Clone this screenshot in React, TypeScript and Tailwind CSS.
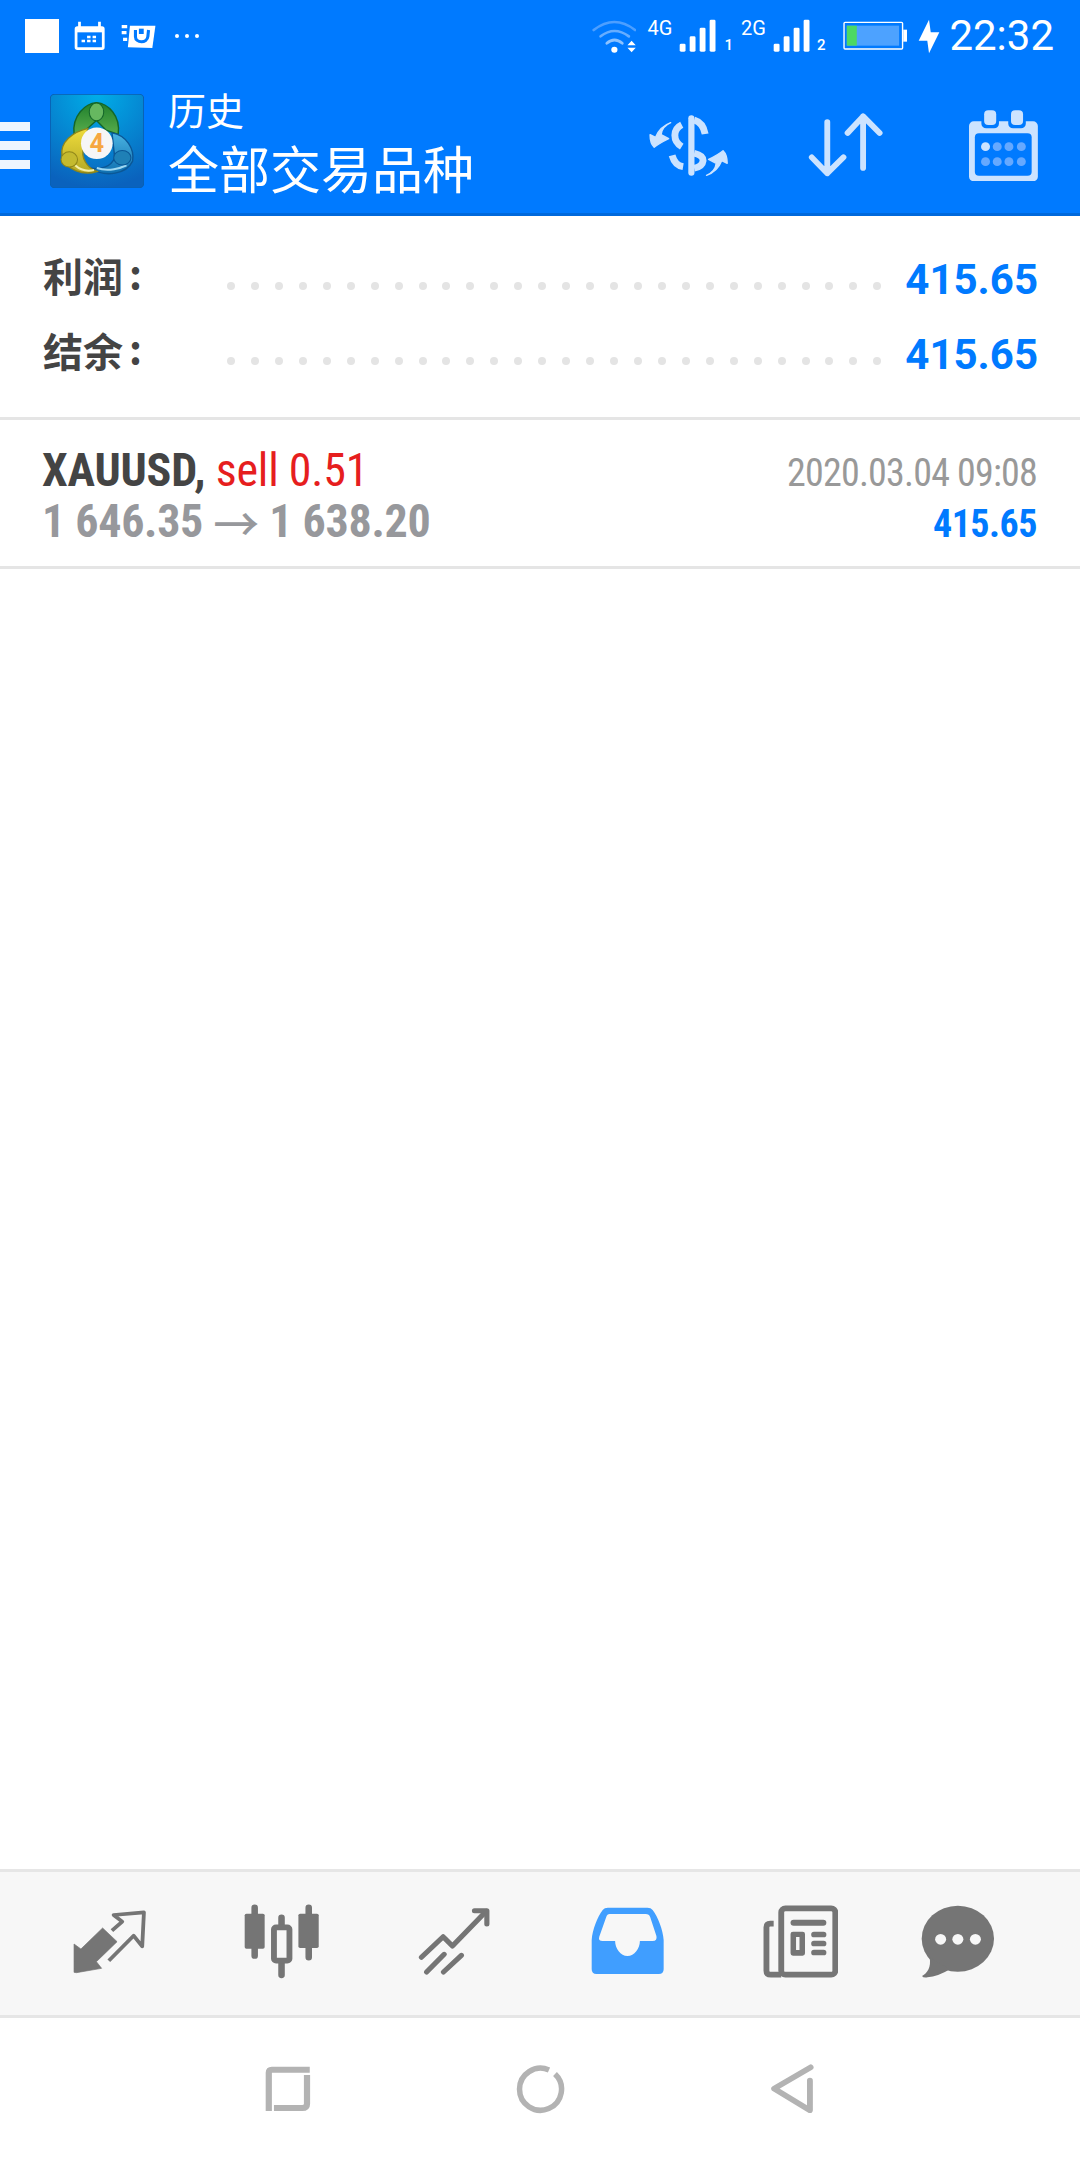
import React from "react";

const Z = ({ x, y, w, h, className, children }: { x: number; y: number; w: number; h: number; className?: string; children: React.ReactNode }) => (
  <svg viewBox={`${x} ${y} ${w} ${h}`} preserveAspectRatio="none" width={w / 2.904} height={h / 3} className={className}>
    {children}
  </svg>
);

const Signal = () => (
  <Z x={405} y={58} w={108} h={100}>
    <rect x={407} y={132} width={17} height={24} rx={4} fill="#fff" />
    <rect x={436} y={110} width={17} height={46} rx={4} fill="#fff" />
    <rect x={465} y={84} width={17} height={72} rx={4} fill="#fff" />
    <rect x={494} y={60} width={17} height={96} rx={4} fill="#fff" />
  </Z>
);

const Logo = () => (
  <svg viewBox="62 55 273 273" width={94} height={94} className="shrink-0">
    <defs>
      <radialGradient id="lg" cx="50%" cy="0%" r="100%">
        <stop offset="0%" stopColor="#00aee8" />
        <stop offset="100%" stopColor="#0a62bd" />
      </radialGradient>
      <linearGradient id="gr" x1="0" y1="0" x2="0" y2="1">
        <stop offset="0%" stopColor="#1f7f2c" />
        <stop offset="100%" stopColor="#58ad4c" />
      </linearGradient>
      <linearGradient id="ye" x1="0" y1="0" x2="0" y2="1">
        <stop offset="0%" stopColor="#efdc3c" />
        <stop offset="100%" stopColor="#b5a925" />
      </linearGradient>
      <linearGradient id="bl" x1="0" y1="0" x2="0" y2="1">
        <stop offset="0%" stopColor="#4ab4e2" />
        <stop offset="100%" stopColor="#0f6fb0" />
      </linearGradient>
    </defs>
    <rect x={63} y={56} width={271} height={271} rx={12} fill="url(#lg)" stroke="#0a5fb0" strokeWidth={3} />
    <path d="M132 172C125 118 165 82 197 80C230 82 268 118 260 172L225 160L197 132L165 160Z" fill="url(#gr)" stroke="#14662a" strokeWidth={4} />
    <ellipse cx={197} cy={107} rx={21} ry={26} fill="#66b860" stroke="#14662a" strokeWidth={3} />
    <path d="M242 168C284 175 308 215 302 250C285 286 225 300 178 270C212 276 240 265 250 240Z" fill="url(#bl)" stroke="#0b5796" strokeWidth={4} />
    <path d="M198 270C232 282 268 270 284 262" fill="none" stroke="#9fd8f2" strokeWidth={6} />
    <ellipse cx={272} cy={240} rx={25} ry={21} fill="#1f80b6" stroke="#0b5796" strokeWidth={3} />
    <path d="M172 155C128 165 90 195 97 235C110 278 160 292 198 280C170 270 150 240 160 210Z" fill="url(#ye)" stroke="#8f861a" strokeWidth={4} />
    <path d="M135 262C150 276 172 280 190 276" fill="none" stroke="#f4efa8" strokeWidth={6} />
    <ellipse cx={118} cy={245} rx={24} ry={22} fill="#c4ba2f" stroke="#8f861a" strokeWidth={3} />
    <circle cx={198} cy={198} r={46} fill="#f6f6f6" />
    <text x={198} y={224} textAnchor="middle" fontSize={74} fontWeight={700} fontFamily="Roboto, sans-serif" fill="#f6a740">4</text>
  </svg>
);

const Dots = () => (
  <div className="flex flex-1 justify-between mt-[14px] ml-[8px] mr-[24px]">
    {Array.from({ length: 28 }).map((_, i) => (
      <div key={i} className="w-[8px] h-[8px] rounded-full bg-[#e4e4e4]" />
    ))}
  </div>
);

const Summary = ({ label }: { label: string }) => (
  <div className="flex items-center h-[75px]">
    <div className="w-[176px] -mt-[8px] flex text-[40px] font-bold text-[#444] leading-none [font-family:'Noto_Sans_CJK_SC',sans-serif]">
      <span>{label}</span>
      <span className="ml-[6px] -mt-[3px]">:</span>
    </div>
    <Dots />
    <span className="text-[42px] font-bold text-[#007aff] leading-none [font-family:Roboto,sans-serif] mt-[3px]">415.65</span>
  </div>
);

export default function App() {
  return (
    <div className="flex flex-col w-[1080px] h-[2160px] bg-white overflow-hidden [font-family:Roboto,sans-serif]">
      <header className="flex flex-col h-[216px] bg-[#007aff] border-b-[3px] border-[#0069dc] text-white">
        <div className="flex items-center justify-between h-[72px] pl-[25px] pr-[26px]">
          <div className="flex items-center">
            <div className="w-[34px] h-[34px] bg-white" />
            <Z x={216} y={64} w={92} h={88} className="ml-[15px]">
              <rect x={222} y={84} width={79} height={63} rx={4} fill="none" stroke="#fff" strokeWidth={8} />
              <rect x={222} y={84} width={79} height={14} fill="#fff" />
              <path d="M232 66V84M290 66V84" stroke="#fff" strokeWidth={8} />
              <path d="M254 108h10v8h-10zM270 108h10v8h-10zM238 120h10v8h-10zM254 120h10v8h-10zM270 120h10v8h-10z" fill="#fff" />
            </Z>
            <Z x={350} y={70} w={102} h={74} className="ml-[15px]">
              <path d="M376 75H450L441 142L370 140Z" fill="#fff" />
              <path d="M352 78H368M352 96H366M356 116H368" stroke="#fff" strokeWidth={10} />
              <path d="M392 88V108C392 128 426 128 428 108L430 88" fill="none" stroke="#007aff" strokeWidth={9} />
              <path d="M402 84H416V100H402Z" fill="#007aff" />
            </Z>
            <div className="flex gap-[6px] ml-[19px]">
              <div className="w-[4px] h-[4px] rounded-full bg-white" />
              <div className="w-[4px] h-[4px] rounded-full bg-white" />
              <div className="w-[4px] h-[4px] rounded-full bg-white" />
            </div>
          </div>
          <div className="flex items-center">
            <Z x={140} y={55} w={130} h={105}>
              <path d="M145 88Q205 40 265 88" fill="none" stroke="#4d9fff" strokeWidth={8} strokeLinecap="round" />
              <path d="M165 107Q205 75 247 107" fill="none" stroke="#66adff" strokeWidth={8} strokeLinecap="round" />
              <path d="M183 128Q205 108 228 128" fill="none" stroke="#8cc2ff" strokeWidth={8} strokeLinecap="round" />
              <circle cx={205} cy={147} r={9} fill="#fff" />
              <path d="M255 120L267 134H243ZM255 155L267 141H243Z" fill="#fff" />
            </Z>
            <span className="ml-[11px] mb-[16px] text-[20px] leading-none">4G</span>
            <div className="ml-[7px]"><Signal /></div>
            <span className="ml-[8px] mt-[18px] text-[15px] font-medium leading-none">1</span>
            <span className="ml-[8px] mb-[16px] text-[20px] leading-none">2G</span>
            <div className="ml-[7px]"><Signal /></div>
            <span className="ml-[7px] mt-[18px] text-[15px] font-medium leading-none">2</span>
            <Z x={880} y={64} w={188} h={88} className="ml-[17px]">
              <rect x={883} y={68} width={170} height={80} rx={3} fill="none" stroke="#fff" strokeWidth={4} />
              <rect x={891} y={78} width={152} height={60} fill="#4da2ff" />
              <rect x={891} y={78} width={29} height={60} fill="#4cd964" />
              <rect x={1055} y={90} width={11} height={36} fill="#fff" />
            </Z>
            <Z x={1098} y={55} w={64} h={105} className="ml-[11px]">
              <path d="M1130 57L1100 120H1125L1130 158L1160 95H1135Z" fill="#fff" />
            </Z>
            <span className="ml-[9px] text-[42px] leading-none">22:32</span>
          </div>
        </div>
        <div className="flex items-center flex-1 pb-[6px]">
          <div className="flex flex-col gap-[10px] w-[30px] mt-[12px] shrink-0">
            <div className="h-[9px] bg-[#eef6ff]" />
            <div className="h-[9px] bg-[#eef6ff]" />
            <div className="h-[9px] bg-[#eef6ff]" />
          </div>
          <div className="ml-[20px] mt-[3px]"><Logo /></div>
          <div className="flex flex-col gap-[7px] mt-[2px] ml-[24px] [font-family:'Noto_Sans_CJK_SC',sans-serif] font-normal">
            <span className="text-[38px] leading-[46px]">历史</span>
            <span className="text-[51px] leading-[56px]">全部交易品种</span>
          </div>
          <div className="flex items-center ml-auto mr-[42px] mt-[12px]">
            <Z x={318} y={335} w={236} h={184}>
              <path d="M444 345V508" stroke="#cce3ff" strokeWidth={18} strokeLinecap="round" />
              <path d="M416 364Q396 374 396 396Q396 418 416 430" fill="none" stroke="#cce3ff" strokeWidth={20} />
              <path d="M452 350Q478 358 484 392" fill="none" stroke="#cce3ff" strokeWidth={20} />
              <path d="M388 456Q396 486 420 490" fill="none" stroke="#cce3ff" strokeWidth={20} />
              <path d="M452 450Q478 456 478 472Q476 490 452 495" fill="none" stroke="#cce3ff" strokeWidth={20} />
              <path d="M384 358Q358 370 356 394L378 406Q350 420 336 432Q324 420 324 394L340 402Q352 370 384 358Z" fill="#cce3ff" stroke="#cce3ff" strokeWidth={4} strokeLinejoin="round" />
              <path d="M384 358Q358 370 356 394L378 406Q350 420 336 432Q324 420 324 394L340 402Q352 370 384 358Z" fill="#cce3ff" stroke="#cce3ff" strokeWidth={4} strokeLinejoin="round" transform="rotate(180 436 437)" />
            </Z>
            <Z x={780} y={335} w={218} h={192} className="ml-[79px]">
              <path d="M836 362V516M791 468L836 516L883 468M940 500V345M895 395L940 345L988 395" fill="none" stroke="#cce3ff" strokeWidth={17} strokeLinecap="round" strokeLinejoin="round" />
            </Z>
            <Z x={1243} y={320} w={200} h={214} className="ml-[86px]">
              <rect x={1243} y={354} width={200} height={180} rx={14} fill="#cce3ff" />
              <rect x={1260} y={390} width={165} height={127} rx={12} fill="#007aff" />
              <rect x={1279} y={321} width={51} height={54} rx={14} fill="#007aff" />
              <rect x={1357} y={321} width={51} height={54} rx={14} fill="#007aff" />
              <rect x={1287} y={321} width={35} height={44} rx={12} fill="#cce3ff" />
              <rect x={1365} y={321} width={35} height={44} rx={12} fill="#cce3ff" />
              <circle cx={1291} cy={430} r={13} fill="#cce3ff" />
              {[1325, 1359, 1395].map((c) => <circle key={c} cx={c} cy={430} r={13} fill="#66a9ff" />)}
              {[1291, 1325, 1359, 1395].map((c) => <circle key={c} cx={c} cy={475} r={13} fill="#66a9ff" />)}
            </Z>
          </div>
        </div>
      </header>

      <section className="flex flex-col h-[204px] pl-[43px] pr-[42px] pt-[25px] border-b-[3px] border-[#e5e5e5]">
        <Summary label="利润" />
        <Summary label="结余" />
      </section>

      <section className="flex justify-between h-[149px] pl-[42px] pr-[43px] pt-[25px] border-b-[3px] border-[#e5e5e5] [font-family:'Roboto_Condensed',Roboto,sans-serif] [font-stretch:condensed]">
        <div className="flex flex-col">
          <div className="text-[46px] leading-[50px] whitespace-pre tracking-[-0.2px]">
            <span className="font-bold text-[#444]">XAUUSD,</span>
            <span className="text-[#e61e1e]"> sell 0.51</span>
          </div>
          <div className="flex items-center text-[46px] leading-[50px] mt-[1px] font-bold text-[#97989c] whitespace-pre tracking-[-0.3px]">
            <span>1 646.35 </span>
            <span className="font-medium [font-family:'Noto_Sans_CJK_SC',sans-serif] [font-stretch:normal]">→</span>
            <span> 1 638.20</span>
          </div>
        </div>
        <div className="flex flex-col items-end">
          <span className="text-[38px] leading-[50px] mt-[3px] text-[#999] tracking-[-0.8px]">2020.03.04 09:08</span>
          <span className="text-[38px] leading-[50px] mt-[1px] font-bold text-[#007aff] tracking-[-0.5px]">415.65</span>
        </div>
      </section>

      <div className="flex-1" />

      <nav className="flex items-center w-full h-[149px] pl-[26px] pb-[5px] bg-[#f7f7f7] border-y-[3px] border-[#e6e6e6]">
        <div className="flex justify-center w-[169px]">
          <Z x={212} y={150} w={215} h={195}>
            <path d="M215 340V255L235 270L298 207L340 248L280 308L295 328L222 341Z" fill="#757575" strokeLinejoin="round" stroke="#757575" strokeWidth={2} />
            <path d="M325 215L355 188L330 168L418 160L413 262L388 230L316 305" fill="none" stroke="#757575" strokeWidth={11} strokeLinejoin="round" />
          </Z>
        </div>
        <div className="flex justify-center w-[173px]">
          <Z x={708} y={133} w={220} h={225}>
            <path d="M739 144V288M896 144V293M817 174V346" stroke="#757575" strokeWidth={19} strokeLinecap="round" />
            <rect x={710} y={162} width={58} height={105} rx={5} fill="#757575" />
            <rect x={866} y={162} width={59} height={103} rx={5} fill="#757575" />
            <rect x={795} y={203} width={45} height={100} rx={6} fill="#f7f7f7" stroke="#757575" strokeWidth={17} />
          </Z>
        </div>
        <div className="flex justify-center w-[173px]">
          <Z x={1212} y={140} w={212} h={206}>
            <path d="M1222 291L1285 229L1312 257L1410 153" fill="none" stroke="#757575" strokeWidth={15} strokeLinecap="round" strokeLinejoin="round" />
            <path d="M1376 151H1412V191" fill="none" stroke="#757575" strokeWidth={15} strokeLinecap="round" strokeLinejoin="round" />
            <path d="M1237 335L1288 282M1286 335L1338 285" stroke="#757575" strokeWidth={15} strokeLinecap="round" />
          </Z>
        </div>
        <div className="flex justify-center w-[173px]">
          <Z x={146} y={141} w={213} h={203}>
            <path fillRule="evenodd" fill="#409eff" d="M148 240C150 210 165 170 180 150Q185 143 195 143H310Q320 143 325 150C340 170 355 210 357 240V328Q357 342 343 342H162Q148 342 148 328ZM200 162H305Q315 162 318 172L336 228Q339 243 325 243H288C288 265 272 288 252 288C232 288 216 265 216 243H180Q166 243 170 230L190 172Q193 162 200 162Z" />
          </Z>
        </div>
        <div className="flex justify-center w-[173px]">
          <Z x={647} y={133} w={220} h={219}>
            <rect x={700} y={143} width={157} height={199} rx={12} fill="none" stroke="#757575" strokeWidth={17} />
            <path d="M678 189H668Q657 189 657 200V330Q657 342 670 342H700" fill="none" stroke="#757575" strokeWidth={17} />
            <rect x={727} y={177} width={104} height={18} rx={9} fill="#757575" />
            <path fillRule="evenodd" fill="#757575" d="M734 213H762Q769 213 769 220V278Q769 285 762 285H734Q727 285 727 278V220Q727 213 734 213ZM743 229V268H753V229Z" />
            <rect x={787} y={213} width={44} height={17} rx={8} fill="#757575" />
            <rect x={787} y={240} width={44} height={17} rx={8} fill="#757575" />
            <rect x={787} y={267} width={44} height={17} rx={8} fill="#757575" />
          </Z>
        </div>
        <div className="flex justify-center w-[142px]">
          <Z x={1106} y={133} w={214} h={219}>
            <ellipse cx={1213} cy={234} rx={105} ry={99} fill="#757575" />
            <path d="M1131 290C1136 320 1125 337 1109 346Q1112 352 1125 350Q1155 348 1190 326Z" fill="#757575" />
            {[1163, 1213, 1264].map((c) => <circle key={c} cx={c} cy={236} r={16} fill="#f7f7f7" />)}
          </Z>
        </div>
      </nav>

      <div className="flex justify-center items-center h-[142px] pb-[1px]">
        <div className="flex justify-center w-[252px]">
          <Z x={770} y={615} w={132} h={138}>
            <path d="M900 626H790Q781 626 781 635V750" fill="none" stroke="#b3b3b3" strokeWidth={18} />
            <path d="M892 642V728Q892 741 878 741H796" fill="none" stroke="#b3b3b3" strokeWidth={18} />
          </Z>
        </div>
        <div className="flex justify-center w-[252px]">
          <svg viewBox="-26 -26 52 52" width={52} height={52}>
            <path d="M15 -15A21 21 0 1 1 9 -19" fill="none" stroke="#b3b3b3" strokeWidth={5.5} />
          </svg>
        </div>
        <div className="flex justify-center w-[252px]">
          <Z x={660} y={610} w={128} h={148}>
            <path d="M778 620L672 684L776 749V660" fill="none" stroke="#b3b3b3" strokeWidth={17} strokeLinejoin="round" strokeLinecap="round" />
          </Z>
        </div>
      </div>
    </div>
  );
}
